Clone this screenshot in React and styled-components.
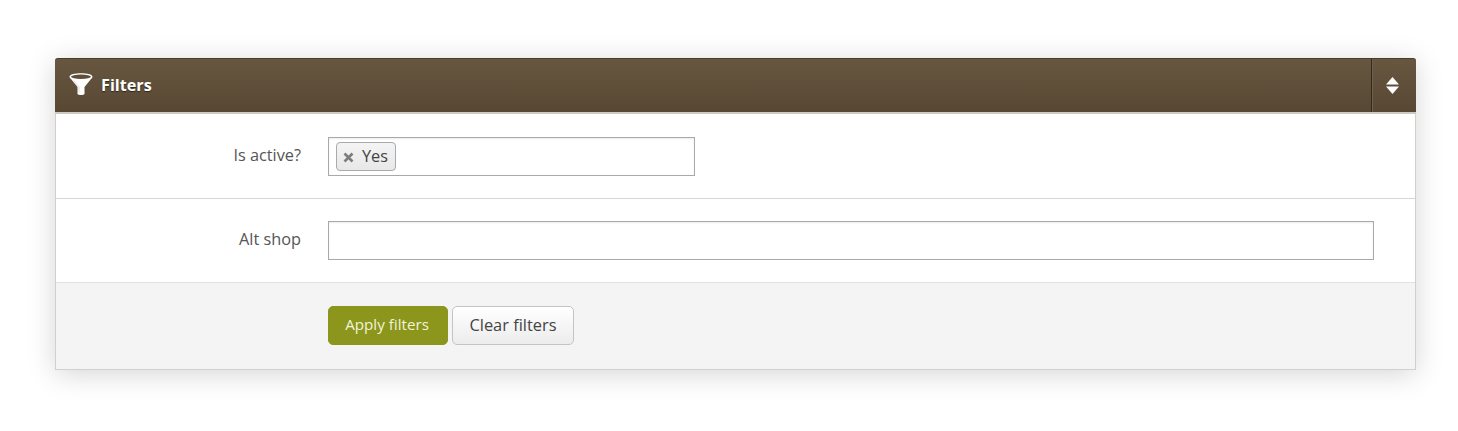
import styled, { createGlobalStyle } from "styled-components";

const GlobalStyle = createGlobalStyle`
  html, body {
    margin: 0;
    padding: 0;
    background: #ffffff;
    font-family: "Open Sans", "Liberation Sans", sans-serif;
  }
`;

const Page = styled.div`
  padding: 58px 42px 61px 55px;
`;

const Panel = styled.section`
  border: 1px solid #d3cfcb;
  border-top: none;
  border-radius: 3px 3px 0 0;
  box-shadow: 0 4px 28px rgba(0, 0, 0, 0.17);
  background: #ffffff;
`;

const Header = styled.header`
  display: flex;
  align-items: stretch;
  height: 53px;
  margin: 0 -1px;
  background: linear-gradient(#675640, #584833);
  border-top: 1px solid #4a3d2b;
  border-bottom: 2px solid #cfc9c3;
  border-radius: 3px 3px 0 0;
  box-sizing: content-box;
`;

const Title = styled.h2`
  flex: 1;
  display: flex;
  align-items: center;
  gap: 8px;
  margin: 0;
  padding: 0 0 2px 14px;
  color: #ffffff;
  font-size: 16.200px;
  font-weight: 700;
  text-shadow: 0 1px 1px rgba(0, 0, 0, 0.5);
`;

const Toggle = styled.div`
  width: 45px;
  padding-right: 3px;
  box-sizing: border-box;
  display: flex;
  align-items: center;
  justify-content: center;
  border-left: 1px solid #2f2a22;
  box-shadow: inset 1px 0 0 #6f5f49;
`;

const Row = styled.div`
  display: grid;
  grid-template-columns: 245px 1fr;
  column-gap: 27px;
  align-items: center;
  height: ${(p) => p.$height}px;
  border-bottom: 1px solid ${(p) => p.$line};
  box-sizing: border-box;
`;

const Label = styled.label`
  padding-bottom: 3px;
  text-align: right;
  color: #555555;
  font-size: 16.300px;
`;

const TagField = styled.div`
  display: flex;
  align-items: center;
  width: 367px;
  height: 39px;
  padding-left: 7px;
  box-sizing: border-box;
  border: 1px solid #a9a9a9;
  box-shadow: inset 0 1px 2px rgba(0, 0, 0, 0.08);
  background: #ffffff;
`;

const Tag = styled.span`
  display: flex;
  align-items: center;
  gap: 8px;
  height: 29px;
  padding: 0 7px 1px 6px;
  box-sizing: border-box;
  border: 1px solid #aaaaaa;
  border-radius: 4px;
  background: linear-gradient(#f4f4f4, #e8e8e8);
  color: #444444;
  font-size: 16.300px;
`;

const RemoveGlyph = styled.svg`
  margin-top: 3px;
`;

const TextInput = styled.input`
  display: block;
  width: 1046px;
  height: 39px;
  padding: 0 8px;
  box-sizing: border-box;
  border: 1px solid #a9a9a9;
  border-radius: 0;
  box-shadow: inset 0 1px 2px rgba(0, 0, 0, 0.08);
  outline: none;
`;

const Footer = styled.div`
  display: flex;
  gap: 4px;
  height: 86px;
  padding: 23px 0 0 272px;
  box-sizing: border-box;
  background: #f4f4f4;
`;

const Button = styled.button`
  height: 39px;
  width: ${(p) => p.$width}px;
  padding: 0 ${(p) => (p.$primary ? 2 : 0)}px 3px 0;
  box-sizing: border-box;
  border: 1px solid ${(p) => (p.$primary ? "#8c961c" : "#c4c4c4")};
  border-radius: 5px;
  background: ${(p) => (p.$primary ? "#8c961c" : "linear-gradient(#ffffff, #ececec)")};
  color: ${(p) => (p.$primary ? "#f1f3d9" : "#444444")};
  font-family: inherit;
  font-size: ${(p) => (p.$primary ? 15.2 : 16.4)}px;
`;

function FunnelIcon() {
  return (
    <svg width="24" height="23" viewBox="0 0 24 23" fill="none">
      <path
        d="M.5 3.800C.5 1.300 6 .3 12 .3S23.500 1.300 23.500 3.800c0 .8-.5 1.500-1.500 2.300l-6.500 8v6.800c-1.300 1.400-5.700 1.400-7 0v-6.800L2 6.100C1 5.300.5 4.600.5 3.800Z"
        fill="#ffffff"
      />
      <ellipse cx="12" cy="3.700" rx="10" ry="2.200" fill="#5f4f3a" />
      <path d="M4.500 7.500 10 13.800v6" stroke="#d9d4ce" strokeWidth=".8" />
    </svg>
  );
}

function SortIcon() {
  return (
    <svg width="13" height="17" viewBox="0 0 13 17" fill="#ffffff">
      <path d="M6.500 0 13 7.500H0Z" />
      <path d="M0 9.500h13L6.500 17Z" />
    </svg>
  );
}

function RemoveIcon() {
  return (
    <RemoveGlyph width="11" height="11" viewBox="0 0 11 11" stroke="#7d7d7d" strokeWidth="2.600">
      <path d="M1.500 1.500l8 8M9.500 1.500l-8 8" />
    </RemoveGlyph>
  );
}

export default function App() {
  return (
    <Page>
      <GlobalStyle />
      <Panel>
        <Header>
          <Title>
            <FunnelIcon />
            Filters
          </Title>
          <Toggle>
            <SortIcon />
          </Toggle>
        </Header>
        <Row $height={85} $line="#d5d5d5">
          <Label>Is active?</Label>
          <TagField>
            <Tag>
              <RemoveIcon />
              Yes
            </Tag>
          </TagField>
        </Row>
        <Row $height={84} $line="#e2e2e2">
          <Label>Alt shop</Label>
          <TextInput />
        </Row>
        <Footer>
          <Button $primary $width={120}>Apply filters</Button>
          <Button $width={122}>Clear filters</Button>
        </Footer>
      </Panel>
    </Page>
  );
}
